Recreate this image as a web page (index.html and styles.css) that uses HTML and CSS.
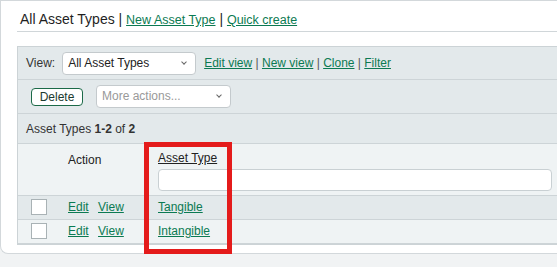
FILE: index.html
```html
<!DOCTYPE html>
<html lang="en">
<head>
    <meta charset="UTF-8">
    <title>All Asset Types</title>
    <link rel="stylesheet" href="styles.css">
</head>
<body>
    <div class="card">
        <h1 class="title">All Asset Types | <a href="#">New Asset Type</a> | <a href="#">Quick create</a></h1>

        <div class="grid">
            <div class="bar view-bar">
                <span class="lbl">View:</span>
                <div class="select view-select">All Asset Types <span class="chev"></span></div>
                <span class="links"><a href="#">Edit view</a> | <a href="#">New view</a> | <a href="#">Clone</a> | <a href="#">Filter</a></span>
            </div>
            <div class="bar action-bar">
                <button class="btn">Delete</button>
                <div class="select more-select">More actions... <span class="chev"></span></div>
            </div>
            <div class="bar count-bar"><span>Asset Types <b>1-2</b> of <b>2</b></span></div>

            <table class="list">
                <tr class="head">
                    <th class="c-check"></th>
                    <th class="c-action">Action</th>
                    <th class="c-type">
                        <a href="#" class="sort">Asset Type</a>
                        <input type="text" class="filter">
                    </th>
                </tr>
                <tr>
                    <td class="c-check"><span class="box"></span></td>
                    <td class="c-action"><a href="#">Edit</a> <a href="#">View</a></td>
                    <td class="c-type"><a href="#">Tangible</a></td>
                </tr>
                <tr class="alt">
                    <td class="c-check"><span class="box"></span></td>
                    <td class="c-action"><a href="#">Edit</a> <a href="#">View</a></td>
                    <td class="c-type"><a href="#">Intangible</a></td>
                </tr>
            </table>
        </div>

        <div class="highlight"></div>
    </div>
</body>
</html>
```

FILE: styles.css
```css
body {
    margin: 0;
    background: #f1f3f4;
    font-family: "Liberation Sans", Arial, sans-serif;
    font-size: 12px;
    color: #222;
    overflow: hidden;
}
a {
    color: #0b7a52;
    text-decoration: underline;
}
.card {
    position: relative;
    width: 560px;
    background: #fff;
    border: 1px solid #d3d8db;
    border-right: none;
    border-radius: 0 0 0 8px;
    padding: 0 0 8px 16px;
}
.title {
    margin: 0 0 14px 0;
    padding: 10px 0 4px 3px;
    font-size: 14px;
    font-weight: normal;
    color: #1f1f1f;
    border-bottom: 1px solid #d0d6d9;
}
.title a {
    font-size: 12.5px;
}
.grid {
    border: 1px solid #ccd3d6;
    border-right: none;
    background: #e3e9eb;
}
.bar {
    display: flex;
    align-items: center;
    padding-left: 8px;
    border-bottom: 1px solid #cdd4d7;
}
.view-bar {
    height: 32px;
}
.lbl {
    color: #333;
    margin-right: 7px;
}
.select {
    position: relative;
    height: 21px;
    line-height: 21px;
    background: #fff;
    border: 1px solid #c4cacd;
    border-radius: 4px;
    padding-left: 5px;
    box-sizing: content-box;
}
.view-select {
    width: 127px;
    color: #222;
    margin-right: 8px;
}
.chev {
    position: absolute;
    right: 9px;
    top: 7px;
    width: 3px;
    height: 3px;
    border-right: 1px solid #666;
    border-bottom: 1px solid #666;
    transform: rotate(45deg);
}
.links {
    color: #555;
}
.action-bar {
    height: 33px;
    padding-left: 13px;
}
.btn {
    height: 18px;
    width: 52px;
    padding: 0;
    background: #fff;
    border: 1px solid #1c6a48;
    border-radius: 4px;
    font-family: inherit;
    font-size: 12px;
    color: #1b3a30;
    margin-right: 13px;
}
.more-select {
    width: 128px;
    color: #999;
}
.count-bar {
    height: 29px;
    color: #333;
}
.list {
    width: 100%;
    border-collapse: collapse;
    table-layout: fixed;
}
.list td, .list th {
    padding: 0;
    text-align: left;
}
.head {
    background: #eff3f4;
    height: 51px;
    border-bottom: 1px solid #cdd4d7;
}
.head th {
    vertical-align: top;
    font-weight: normal;
    color: #222;
}
.c-check {
    width: 50px;
}
.c-action {
    width: 90px;
}
.head .c-action {
    padding-top: 9px;
}
.head .c-type {
    padding-top: 7px;
}
.sort {
    color: #222;
    display: inline-block;
    margin-bottom: 4px;
}
.filter {
    display: block;
    width: 394px;
    height: 22px;
    box-sizing: border-box;
    border: 1px solid #c9d0d3;
    border-radius: 4px;
    margin: 0;
}
.list tr + tr {
    height: 24px;
    border-bottom: 1px solid #cdd4d7;
}
.alt {
    background: #eff3f4;
}
.list td.c-check {
    padding-left: 13px;
}
.box {
    display: block;
    width: 14px;
    height: 14px;
    border: 1px solid #a9b2b5;
    background: #fff;
}
.c-action a {
    margin-right: 6px;
}
.highlight {
    position: absolute;
    left: 143px;
    top: 141px;
    width: 78px;
    height: 102px;
    border: 5px solid #e41b1b;
}
```
